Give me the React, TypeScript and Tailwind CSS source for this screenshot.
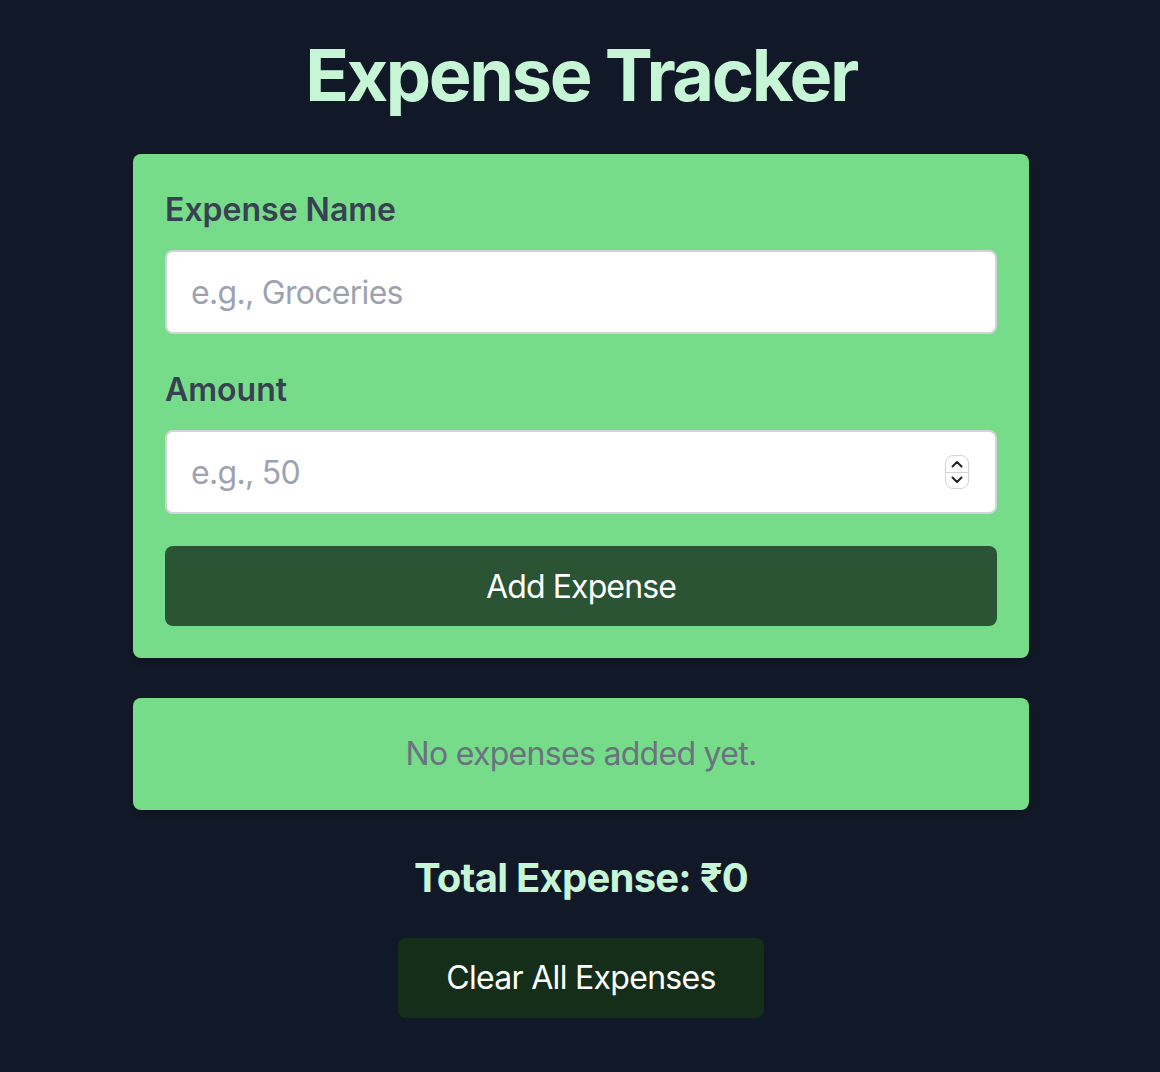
import React from "react";

const Spinner = () => (
  <div className="pointer-events-none absolute right-[28px] top-1/2 flex h-[34px] w-[24px] -translate-y-1/2 flex-col overflow-hidden rounded-[8px] border border-[#d4d4d4] bg-white">
    <div className="flex flex-1 items-center justify-center border-b border-[#d4d4d4]">
      <svg width="12" height="8" viewBox="0 0 12 8" fill="none">
        <path d="M1.5 6.5 6 2l4.5 4.5" stroke="#222" strokeWidth="2" strokeLinecap="round" strokeLinejoin="round" />
      </svg>
    </div>
    <div className="flex flex-1 items-center justify-center">
      <svg width="12" height="8" viewBox="0 0 12 8" fill="none">
        <path d="M1.5 1.5 6 6l4.5-4.5" stroke="#222" strokeWidth="2" strokeLinecap="round" strokeLinejoin="round" />
      </svg>
    </div>
  </div>
);

export default function App() {
  return (
    <div className="min-h-screen bg-[#111827] pt-[35px] pl-[2px] font-['Inter','Liberation_Sans',sans-serif]">
      <div className="mx-auto flex w-[896px] flex-col items-center">
        <h1 className="mb-[39px] text-[72px] leading-[80px] font-bold tracking-[-2.4px] text-[#c6f6d5]">
          Expense Tracker
        </h1>

        <form className="w-full rounded-[8px] bg-[#77dc89] p-[32px] shadow-md">
          <label className="mb-[16px] block text-[32px] leading-[48px] font-semibold text-[#374151]">
            Expense Name
          </label>
          <input
            type="text"
            placeholder="e.g., Groceries"
            className="mb-[32px] block h-[84px] w-full rounded-[8px] border-2 border-[#d1d5db] bg-white px-[24px] text-[32px] tracking-[-0.7px] text-[#111827] placeholder:text-[#9ca3af] focus:outline-none"
          />
          <label className="mb-[16px] block text-[32px] leading-[48px] font-semibold text-[#374151]">
            Amount
          </label>
          <div className="relative mb-[32px]">
            <input
              type="text"
              inputMode="numeric"
              placeholder="e.g., 50"
              className="block h-[84px] w-full rounded-[8px] border-2 border-[#d1d5db] bg-white px-[24px] text-[32px] tracking-[-0.7px] text-[#111827] placeholder:text-[#9ca3af] focus:outline-none"
            />
            <Spinner />
          </div>
          <button
            type="button"
            className="block h-[80px] w-full rounded-[8px] bg-[#2a5434] pt-[2px] text-[32px] leading-[48px] tracking-[-0.9px] text-white"
          >
            Add Expense
          </button>
        </form>

        <div className="mt-[40px] w-full rounded-[8px] bg-[#77dc89] p-[32px] text-center shadow-md">
          <p className="text-[32px] leading-[48px] tracking-[-0.7px] text-[#6b7280]">No expenses added yet.</p>
        </div>

        <h2 className="mt-[40px] text-[40px] leading-[56px] font-bold tracking-[-0.75px] text-[#c6f6d5]">
          Total Expense: ₹0
        </h2>

        <button
          type="button"
          className="mt-[32px] h-[80px] rounded-[8px] bg-[#142e19] px-[48px] text-[32px] leading-[48px] tracking-[-0.7px] text-white"
        >
          Clear All Expenses
        </button>
      </div>
    </div>
  );
}
